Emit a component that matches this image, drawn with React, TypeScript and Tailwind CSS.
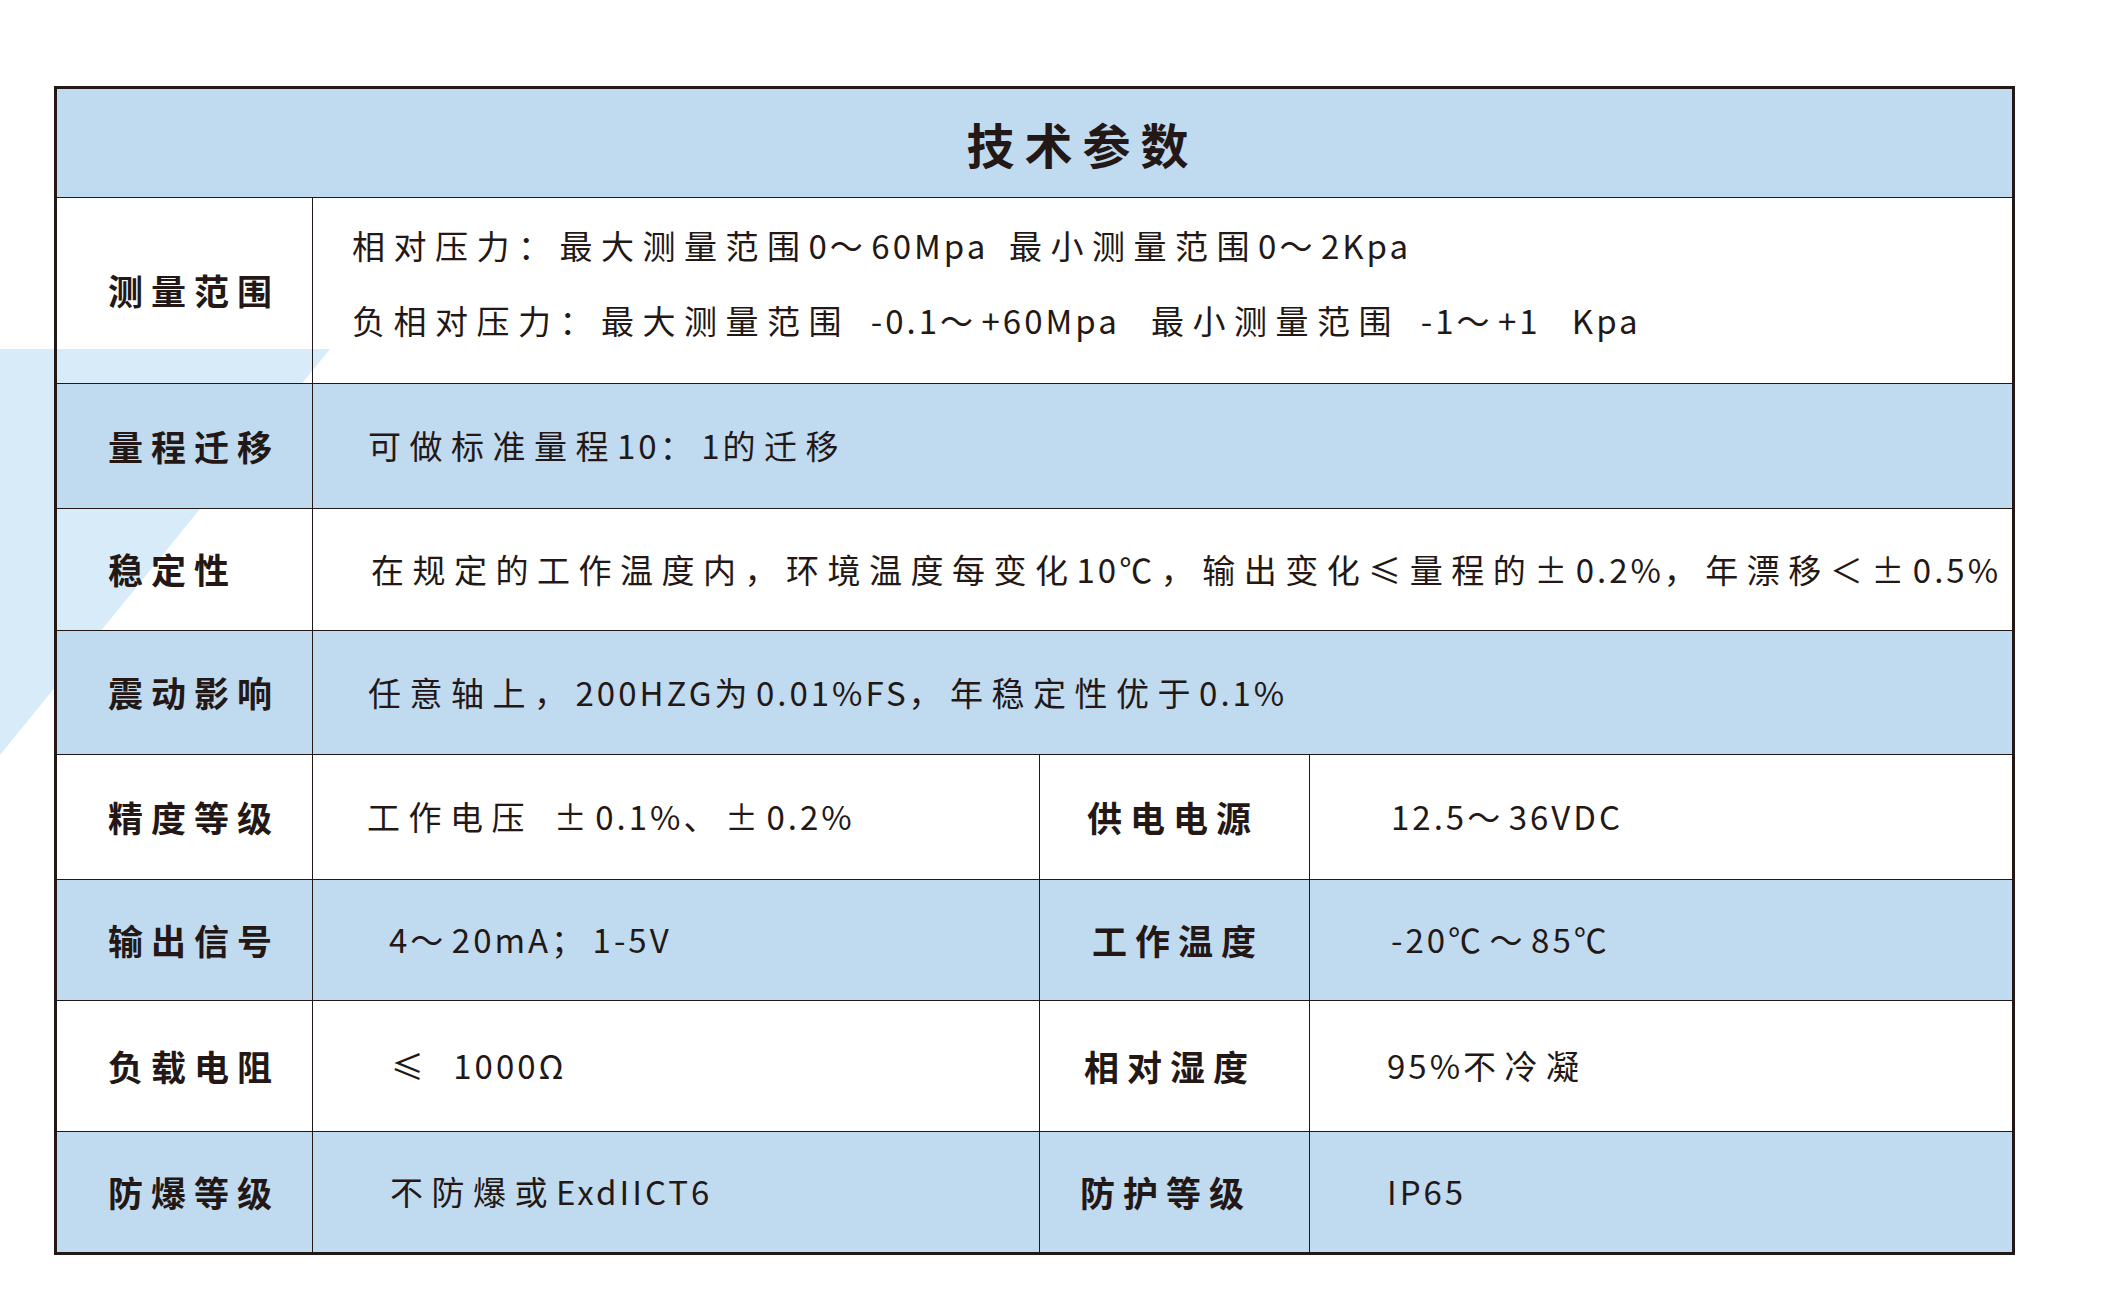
import React from "react";

const ink = "text-[#231815]";

// ASCII runs get tighter tracking than the CJK text around them
function Mixed({ text }: { text: string }) {
  const parts = text.split(/([A-Za-z0-9.%+\-Ω ]+)/);
  return (
    <>
      {parts.map((p, i) =>
        /^[A-Za-z0-9.%+\-Ω ]+$/.test(p) ? (
          <span key={i} className="tracking-[3px]">
            {p}
          </span>
        ) : (
          <span key={i}>{p}</span>
        )
      )}
    </>
  );
}

function Label({ text, pl = "pl-[51px]" }: { text: string; pl?: string }) {
  return (
    <div className={`flex items-center h-full ${pl} font-bold text-[35px] tracking-[8px] ${ink} whitespace-nowrap`}>
      {text}
    </div>
  );
}

function Value({ text, pl }: { text: string; pl: string }) {
  return (
    <div className={`flex items-center h-full ${pl} text-[33px] tracking-[8.5px] ${ink} whitespace-pre`}>
      <span>
        <Mixed text={text} />
      </span>
    </div>
  );
}

export default function App() {
  return (
    <div
      className="relative w-[2101px] h-[1298px] bg-white overflow-hidden"
      style={{ fontFamily: '"Noto Sans CJK SC", "Noto Sans", sans-serif' }}
    >
      {/* background decoration */}
      <svg className="absolute left-0 top-0" width="2101" height="1298" viewBox="0 0 2101 1298">
        <polygon points="0,349 330,349 0,755" fill="#d8ebf8" />
      </svg>

      <div className="relative pt-[86px] pl-[54px]">
        <div className="w-[1961px] border-[3px] border-[#231815] flex flex-col">
          {/* header */}
          <div className="h-[108px] bg-[#c0daf0] flex items-center justify-center pl-[96px]">
            <span className={`font-bold text-[48px] tracking-[10px] ${ink}`}>技术参数</span>
          </div>

          {/* 测量范围 */}
          <div className="h-[186px] flex border-t-[1.5px] border-[#231815]">
            <div className="w-[255px] shrink-0">
              <Label text="测量范围" />
            </div>
            <div className="flex-1 border-l-[1.5px] border-[#231815] flex flex-col justify-center pl-[39px] pb-[16px] text-[33px] tracking-[8.5px] text-[#231815] whitespace-pre">
              <div className="leading-[75px]">
                <Mixed text="相对压力：最大测量范围0～60Mpa  最小测量范围0～2Kpa" />
              </div>
              <div className="leading-[75px]">
                <Mixed text="负相对压力：最大测量范围  -0.1～+60Mpa   最小测量范围  -1～+1   Kpa" />
              </div>
            </div>
          </div>

          {/* 量程迁移 */}
          <div className="h-[125px] flex border-t-[1.5px] border-[#231815] bg-[#c0daf0]">
            <div className="w-[255px] shrink-0">
              <Label text="量程迁移" />
            </div>
            <div className="flex-1 border-l-[1.5px] border-[#231815]">
              <Value text="可做标准量程10：1的迁移" pl="pl-[55px]" />
            </div>
          </div>

          {/* 稳定性 */}
          <div className="h-[122px] flex border-t-[1.5px] border-[#231815]">
            <div className="w-[255px] shrink-0">
              <Label text="稳定性" />
            </div>
            <div className="flex-1 border-l-[1.5px] border-[#231815]">
              <Value text="在规定的工作温度内，环境温度每变化10℃，输出变化≤量程的±0.2%，年漂移＜±0.5%" pl="pl-[58px]" />
            </div>
          </div>

          {/* 震动影响 */}
          <div className="h-[124px] flex border-t-[1.5px] border-[#231815] bg-[#c0daf0]">
            <div className="w-[255px] shrink-0">
              <Label text="震动影响" />
            </div>
            <div className="flex-1 border-l-[1.5px] border-[#231815]">
              <Value text="任意轴上，200HZG为0.01%FS，年稳定性优于0.1%" pl="pl-[55px]" />
            </div>
          </div>

          {/* 精度等级 / 供电电源 */}
          <div className="h-[125px] flex border-t-[1.5px] border-[#231815]">
            <div className="w-[255px] shrink-0">
              <Label text="精度等级" />
            </div>
            <div className="w-[727px] shrink-0 border-l-[1.5px] border-[#231815]">
              <Value text="工作电压  ±0.1%、±0.2%" pl="pl-[54px]" />
            </div>
            <div className="w-[270px] shrink-0 border-l-[1.5px] border-[#231815]">
              <Label text="供电电源" pl="pl-[47px]" />
            </div>
            <div className="flex-1 border-l-[1.5px] border-[#231815]">
              <Value text="12.5～36VDC" pl="pl-[81px]" />
            </div>
          </div>

          {/* 输出信号 / 工作温度 */}
          <div className="h-[121px] flex border-t-[1.5px] border-[#231815] bg-[#c0daf0]">
            <div className="w-[255px] shrink-0">
              <Label text="输出信号" />
            </div>
            <div className="w-[727px] shrink-0 border-l-[1.5px] border-[#231815]">
              <Value text="4～20mA；1-5V" pl="pl-[76px]" />
            </div>
            <div className="w-[270px] shrink-0 border-l-[1.5px] border-[#231815]">
              <Label text="工作温度" pl="pl-[52px]" />
            </div>
            <div className="flex-1 border-l-[1.5px] border-[#231815]">
              <Value text="-20℃～85℃" pl="pl-[81px]" />
            </div>
          </div>

          {/* 负载电阻 / 相对湿度 */}
          <div className="h-[131px] flex border-t-[1.5px] border-[#231815]">
            <div className="w-[255px] shrink-0">
              <Label text="负载电阻" />
            </div>
            <div className="w-[727px] shrink-0 border-l-[1.5px] border-[#231815]">
              <Value text="≤  1000Ω" pl="pl-[78px]" />
            </div>
            <div className="w-[270px] shrink-0 border-l-[1.5px] border-[#231815]">
              <Label text="相对湿度" pl="pl-[44px]" />
            </div>
            <div className="flex-1 border-l-[1.5px] border-[#231815]">
              <Value text="95%不冷凝" pl="pl-[77px]" />
            </div>
          </div>

          {/* 防爆等级 / 防护等级 */}
          <div className="h-[121px] flex border-t-[1.5px] border-[#231815] bg-[#c0daf0]">
            <div className="w-[255px] shrink-0">
              <Label text="防爆等级" />
            </div>
            <div className="w-[727px] shrink-0 border-l-[1.5px] border-[#231815]">
              <Value text="不防爆或ExdIICT6" pl="pl-[77px]" />
            </div>
            <div className="w-[270px] shrink-0 border-l-[1.5px] border-[#231815]">
              <Label text="防护等级" pl="pl-[40px]" />
            </div>
            <div className="flex-1 border-l-[1.5px] border-[#231815]">
              <Value text="IP65" pl="pl-[77px]" />
            </div>
          </div>
        </div>
      </div>
    </div>
  );
}
